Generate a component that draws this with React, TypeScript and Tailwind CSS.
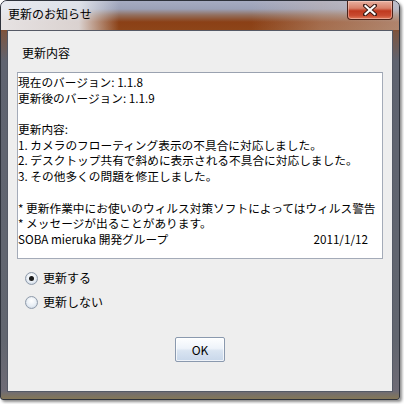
import React, { useState } from 'react';

const font = { fontFamily: '"Noto Sans CJK JP", "Noto Sans", sans-serif' };

const CloseGlyph: React.FC = () => (
    <svg width="14" height="12" viewBox="0 0 14 12">
        <path d="M2 1.5 L12 10.5 M12 1.5 L2 10.5" stroke="#3a1a14" strokeWidth="4" strokeLinecap="square" />
        <path d="M2.5 2 L11.5 10 M11.5 2 L2.5 10" stroke="#ffffff" strokeWidth="2.2" strokeLinecap="square" />
    </svg>
);

const Radio: React.FC<{ checked: boolean; label: string; onClick: () => void }> = ({ checked, label, onClick }) => (
    <div className="flex items-center h-[20px] cursor-default" onClick={onClick}>
        <span className="ml-[17px] w-[13px] h-[13px] rounded-full border border-[#8f9bab] bg-[radial-gradient(circle_at_50%_35%,#ffffff_0%,#e8eef5_55%,#c9d6e4_100%)] flex items-center justify-center shadow-[inset_0_0_1px_rgba(0,0,0,0.15)]">
            {checked && <span className="w-[5px] h-[5px] rounded-full bg-[#1b1b1b]" />}
        </span>
        <span className="ml-[5px] text-[12px] leading-[16px] text-black">{label}</span>
    </div>
);

const lines = [
    '現在のバージョン: 1.1.8',
    '更新後のバージョン: 1.1.9',
    '',
    '更新内容:',
    '1. カメラのフローティング表示の不具合に対応しました。',
    '2. デスクトップ共有で斜めに表示される不具合に対応しました。',
    '3. その他多くの問題を修正しました。',
    '',
    '* 更新作業中にお使いのウィルス対策ソフトによってはウィルス警告',
    '* メッセージが出ることがあります。',
];

export default function App() {
    const [doUpdate, setDoUpdate] = useState(true);

    return (
        <div className="w-[404px] h-[404px] bg-white overflow-hidden" style={font}>
            <div className="w-[400px] h-[400px] rounded-t-[7px] rounded-b-[3px] border border-[#2e323b] shadow-[2px_2px_3px_rgba(0,0,0,0.45)] flex flex-col bg-[linear-gradient(180deg,#a3a9bf_0px,#979db4_10px,#8a4218_25px,#7d5540_31px,#5f636f_60px,#62666f_340px,#6e6b75_390px,#8a7a50_400px)]">
                {/* title bar */}
                <div className="h-[29px] flex items-start relative rounded-t-[6px] bg-[linear-gradient(180deg,#a6acc2_0px,#9ba1b7_8px,#93705f_14px,#8b4016_21px,#8d4519_29px)]">
                    <div className="absolute inset-0 rounded-t-[6px] bg-[linear-gradient(90deg,rgba(238,240,244,0.92)_0px,rgba(232,235,240,0.85)_78px,rgba(232,235,240,0)_118px,rgba(255,255,255,0)_250px,rgba(210,190,180,0.35)_320px,rgba(220,215,215,0.45)_398px)]" />
                    <span className="relative ml-[7px] mt-[5px] text-[12px] leading-[16px] text-black">更新のお知らせ</span>
                    <div className="relative ml-auto mr-[6px] w-[46px] h-[19px] rounded-b-[4px] border border-t-0 border-[#4a2219] bg-[linear-gradient(180deg,#e8b0a0_0%,#d7806a_40%,#c0391f_55%,#c84a30_80%,#e07a5a_100%)] flex items-center justify-center shadow-[inset_0_0_0_1px_rgba(255,220,210,0.45)]">
                        <CloseGlyph />
                    </div>
                </div>

                {/* client area */}
                <div className="mx-[6px] mb-[7px] flex-1 border border-[#555a66] bg-[#eeeeee] flex flex-col">
                    <div className="mt-[14px] ml-[14px] text-[12px] leading-[16px] text-black">更新内容</div>

                    <div className="mt-[11px] ml-[9px] mr-[9px] h-[187px] border border-[#a4abb8] border-t-[#9aa2b0] bg-white pt-[1px] text-[11.7px] leading-[15.7px] text-black">
                        {lines.map((l, i) => (
                            <div key={i} className="h-[15.7px] whitespace-nowrap">{l || '\u00a0'}</div>
                        ))}
                        <div className="h-[15.7px] flex justify-between pr-[14px] whitespace-nowrap">
                            <span>SOBA mieruka 開発グループ</span>
                            <span>2011/1/12</span>
                        </div>
                    </div>

                    <div className="mt-[9px]">
                        <Radio checked={doUpdate} label="更新する" onClick={() => setDoUpdate(true)} />
                    </div>
                    <div className="mt-[4px]">
                        <Radio checked={!doUpdate} label="更新しない" onClick={() => setDoUpdate(false)} />
                    </div>

                    <div className="mt-[25px] flex justify-center">
                        <button className="w-[50px] h-[25px] border border-[#8a99ae] rounded-[2px] bg-[linear-gradient(180deg,#fdfeff_0%,#eef3fa_45%,#d9e4f1_55%,#c8d7ea_100%)] text-[12px] text-black shadow-[inset_0_0_0_1px_rgba(255,255,255,0.7)]">
                            OK
                        </button>
                    </div>
                </div>
            </div>
        </div>
    );
}
